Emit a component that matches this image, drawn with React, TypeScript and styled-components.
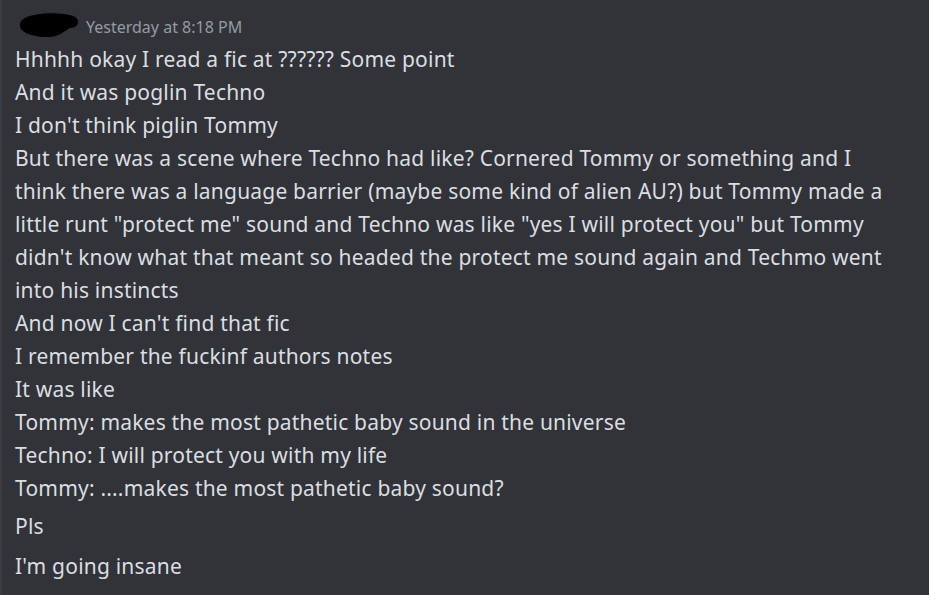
import React from "react";
import styled, { createGlobalStyle } from "styled-components";

const Global = createGlobalStyle`
  html, body { margin: 0; padding: 0; background: #313338; }
  body { width: 929px; height: 595px; overflow: hidden; }
`;

const Page = styled.div`
  width: 929px;
  height: 595px;
  background: #313338;
  box-sizing: border-box;
  border-left: 2px solid #3a3c42;
  padding: 12px 0 0 13px;
  font-family: "Noto Sans", "Open Sans", sans-serif;
  display: flex;
  flex-direction: column;
`;

const Header = styled.div`
  display: flex;
  align-items: center;
  gap: 6px;
  height: 27px;
  margin-left: 3px;
`;

const Timestamp = styled.span`
  color: #949ba4;
  font-size: 16px;
  margin-top: 3px;
`;

const Block = styled.div<{ $top: number }>`
  margin-top: ${(p) => p.$top}px;
  color: #dbdee1;
  font-size: 21px;
  letter-spacing: 0.2px;
  line-height: 33px;
  white-space: nowrap;
`;

const Line = styled.div``;

const Redact = () => (
  <svg width="62" height="27" viewBox="0 0 62 27">
    <path
      d="M4 8 C10 2 30 0 46 2 C56 3 61 6 60 11 C59 16 54 15 50 17 C46 20 40 25 30 25 C20 25 10 23 5 19 C1 16 1 11 4 8 Z"
      fill="#000"
    />
  </svg>
);

const lines = [
  "Hhhhh okay I read a fic at ?????? Some point",
  "And it was poglin Techno",
  "I don't think piglin Tommy",
  "But there was a scene where Techno had like? Cornered Tommy or something and I",
  "think there was a language barrier (maybe some kind of alien AU?) but Tommy made a",
  'little runt "protect me" sound and Techno was like "yes I will protect you" but Tommy',
  "didn't know what that meant so headed the protect me sound again and Techmo went",
  "into his instincts",
  "And now I can't find that fic",
  "I remember the fuckinf authors notes",
  "It was like",
  "Tommy: makes the most pathetic baby sound in the universe",
  "Techno: I will protect you with my life",
  "Tommy: ....makes the most pathetic baby sound?",
];

export default function App() {
  return (
    <>
      <Global />
      <Page>
        <Header>
          <Redact />
          <Timestamp>Yesterday at 8:18 PM</Timestamp>
        </Header>
        <Block $top={4}>
          {lines.map((l, i) => (
            <Line key={i}>{l}</Line>
          ))}
        </Block>
        <Block $top={5}>
          <Line>Pls</Line>
        </Block>
        <Block $top={7}>
          <Line>I'm going insane</Line>
        </Block>
      </Page>
    </>
  );
}
